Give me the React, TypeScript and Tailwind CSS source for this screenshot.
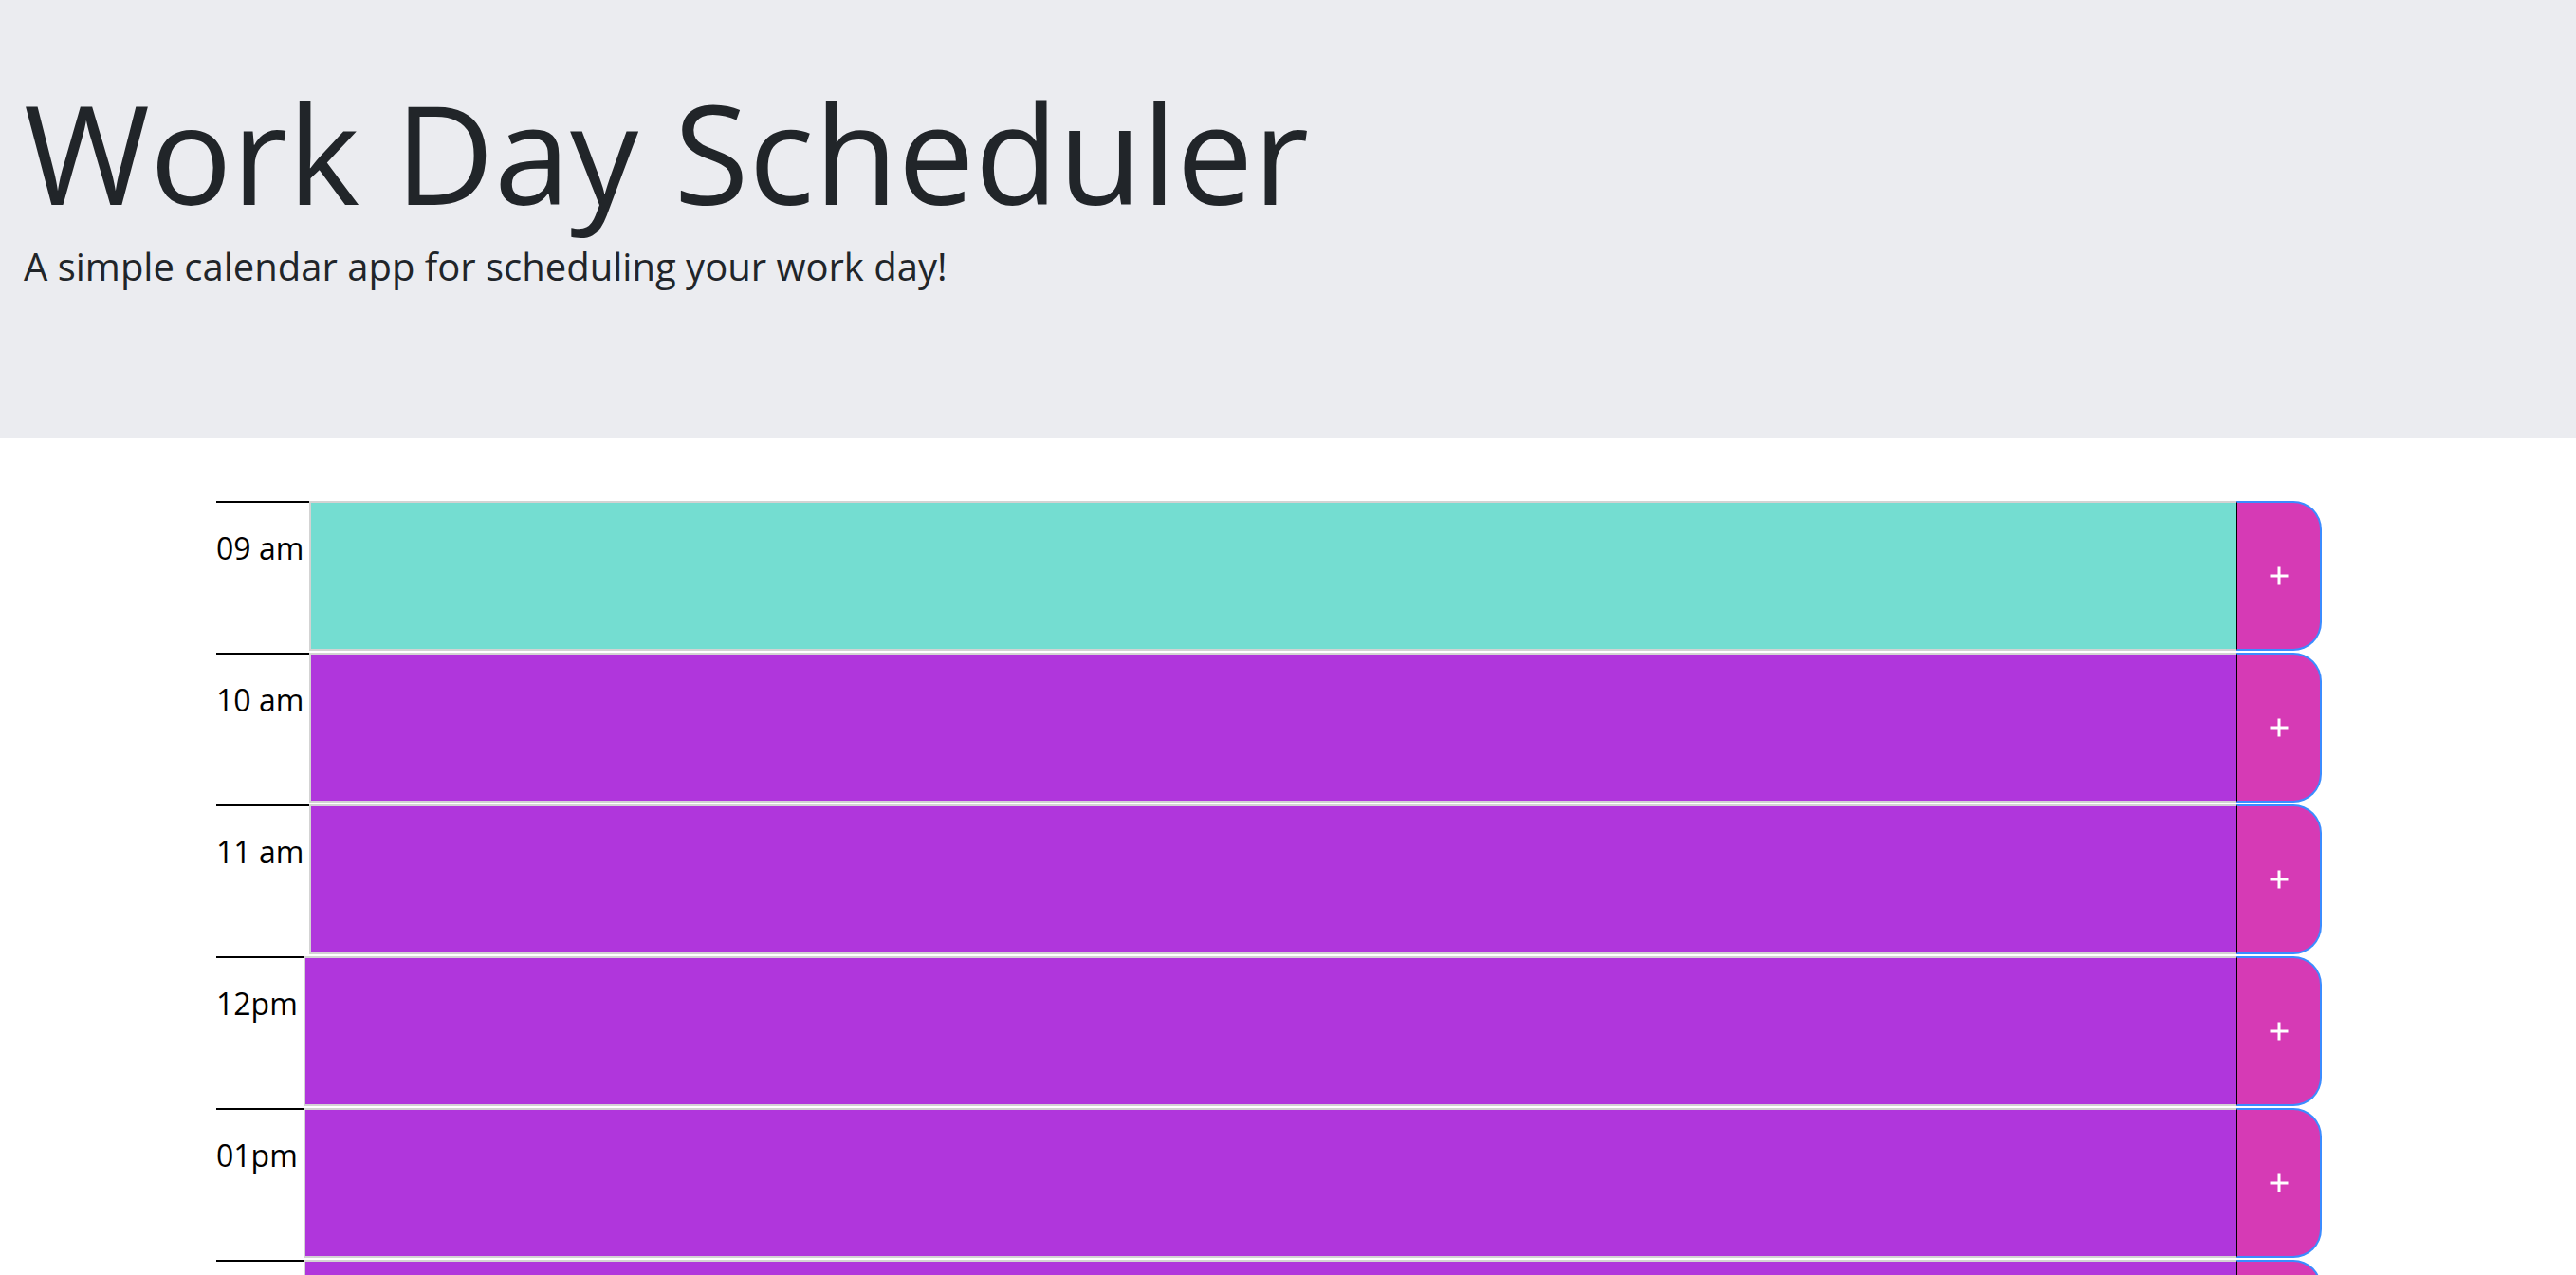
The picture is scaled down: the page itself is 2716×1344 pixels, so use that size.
import React from "react";

type Block = {
  label: string;
  state: "present" | "future";
};

const blocks: Block[] = [
  { label: "09 am", state: "present" },
  { label: "10 am", state: "future" },
  { label: "11 am", state: "future" },
  { label: "12pm", state: "future" },
  { label: "01pm", state: "future" },
  { label: "02pm", state: "future" },
  { label: "03pm", state: "future" },
  { label: "04pm", state: "future" },
  { label: "05pm", state: "future" },
];

const PlusIcon = () => (
  <svg width="20" height="20" viewBox="0 0 20 20" fill="none">
    <path d="M10 0.5v19M0.5 10h19" stroke="white" strokeWidth="3" />
  </svg>
);

const App = () => {
  return (
    <div className="min-h-screen bg-white font-['Open_Sans',sans-serif] text-[#212529]">
      {/* Header */}
      <header className="h-[462px] bg-[#ebecf0] pl-[25px] pt-[74px]">
        <h1 className="text-[144px] leading-[1.2] font-normal">Work Day Scheduler</h1>
        <p className="mt-[4px] text-[40px] leading-[1.5] font-normal">
          A simple calendar app for scheduling your work day!
        </p>
      </header>

      {/* Time blocks */}
      <div className="ml-[228px] mt-[66px] w-[2220px] flex flex-col">
        {blocks.map((block) => (
          <div key={block.label} className="flex h-[160px] items-start">
            <div className="h-full shrink-0 border-t-2 border-black pr-[6px] pt-[24px] text-[32px] leading-[1.5] text-black">
              {block.label}
            </div>
            <textarea
              className={
                block.state === "present"
                  ? "h-[158px] flex-1 resize-none border-2 border-r-0 border-[#d3d3d3] bg-[#74ddd1] outline-none"
                  : "h-[158px] flex-1 resize-none border-2 border-r-0 border-[#d3d3d3] bg-[#b036dc] outline-none"
              }
            />
            <button className="flex h-[158px] w-[91px] shrink-0 items-center justify-center rounded-r-[30px] border-2 border-l-2 border-[#3b8cff] border-l-black bg-[#d63ab5]">
              <PlusIcon />
            </button>
          </div>
        ))}
      </div>
    </div>
  );
};

export default App;
